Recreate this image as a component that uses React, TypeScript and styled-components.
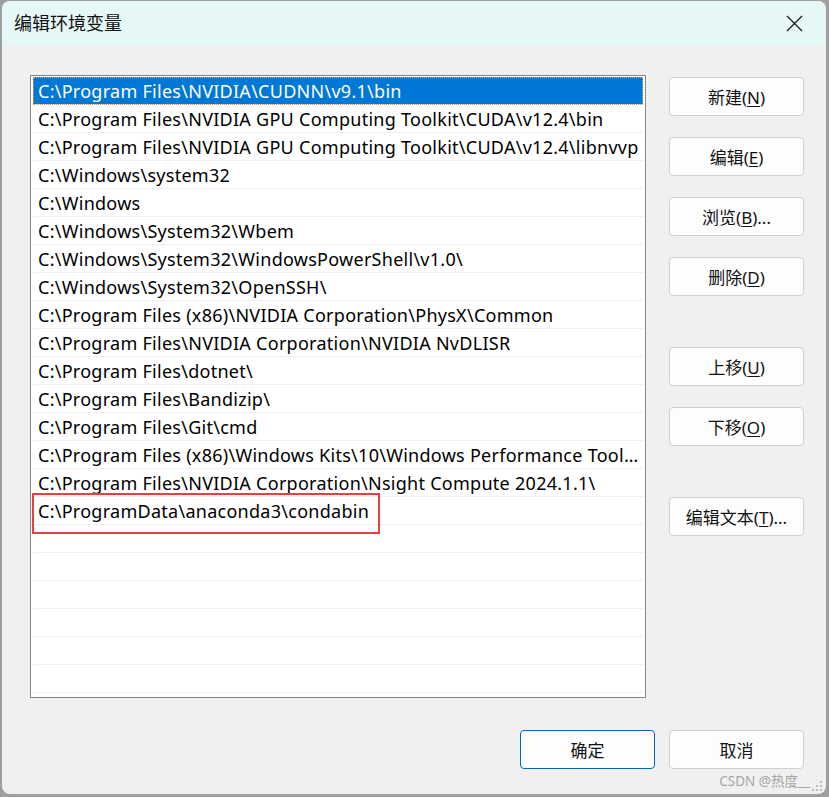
import React from "react";
import styled, { createGlobalStyle } from "styled-components";

const Global = createGlobalStyle`
  html, body {
    margin: 0;
    padding: 0;
    width: 829px;
    height: 797px;
    overflow: hidden;
    background: #9f9f9f;
  }
  * { box-sizing: border-box; }
`;

const FONT = `"Noto Sans", "Noto Sans CJK SC", sans-serif`;

const Window = styled.div`
  position: relative;
  margin: 1px 3px 0 2px;
  width: 824px;
  height: 793px;
  border-radius: 8px;
  background: #f0f0f0;
  overflow: hidden;
  display: flex;
  flex-direction: column;
  font-family: ${FONT};
  color: #000;
`;

const TitleBar = styled.div`
  height: 44px;
  flex: none;
  background: #e6f8f6;
  display: flex;
  align-items: center;
  justify-content: space-between;
  padding: 0 23px 0 12px;
`;

const Title = styled.div`
  font-size: 18px;
  line-height: 1;
  color: #111;
`;

const CloseIcon = styled.svg`
  width: 17px;
  height: 17px;
  display: block;
`;

const Body = styled.div`
  flex: 1;
  display: flex;
  flex-direction: column;
  padding: 30px 22px 0 28px;
`;

const Main = styled.div`
  display: flex;
  gap: 23px;
`;

const ListBox = styled.div`
  position: relative;
  width: 616px;
  height: 623px;
  border: 1px solid #828790;
  background: #fff;
  padding: 1px 2px;
  overflow: hidden;
`;

const Row = styled.div<{ $selected?: boolean }>`
  height: 28px;
  padding: 0 0 0 5px;
  display: flex;
  align-items: center;
  font-size: 18px;
  letter-spacing: 0.27px;
  white-space: nowrap;
  overflow: hidden;
  border-bottom: 1px solid #efefef;
  background: ${(p) => (p.$selected ? "#0078d7" : "transparent")};
  color: ${(p) => (p.$selected ? "#fff" : "#000")};
  outline: ${(p) => (p.$selected ? "1px dotted #e8a060" : "none")};
  outline-offset: -1px;
`;

const RowText = styled.span`
  display: block;
  overflow: hidden;
  text-overflow: ellipsis;
  white-space: nowrap;
  max-width: 100%;
`;

const Highlight = styled.div`
  position: absolute;
  left: 1px;
  top: 417px;
  width: 348px;
  height: 41px;
  border: 2px solid #e8403f;
  pointer-events: none;
`;

const Side = styled.div`
  display: flex;
  flex-direction: column;
  gap: 51px;
  padding-top: 2px;
`;

const Group = styled.div`
  display: flex;
  flex-direction: column;
  gap: 21px;
`;

const Button = styled.button<{ $primary?: boolean }>`
  width: 135px;
  height: 39px;
  border-radius: 4px;
  background: #fdfdfd;
  border: 1px solid ${(p) => (p.$primary ? "#0067c0" : "#d0d0d0")};
  font-family: ${FONT};
  font-size: 17px;
  color: #111;
  padding: 0;
  display: flex;
  align-items: center;
  justify-content: center;
`;

const Key = styled.span`
  text-decoration: underline;
  text-underline-offset: 2px;
`;

const Footer = styled.div`
  display: flex;
  justify-content: flex-end;
  gap: 14px;
  margin-top: 32px;
`;

const Watermark = styled.div`
  position: absolute;
  right: 16px;
  bottom: 6px;
  font-family: "Noto Sans", "Noto Sans CJK SC", sans-serif;
  font-size: 13.5px;
  color: #a6a6a6;
  line-height: 1;
`;

const Grip = styled.svg`
  position: absolute;
  right: 3px;
  bottom: 2px;
  width: 12px;
  height: 12px;
`;

const paths = [
  "C:\\Program Files\\NVIDIA\\CUDNN\\v9.1\\bin",
  "C:\\Program Files\\NVIDIA GPU Computing Toolkit\\CUDA\\v12.4\\bin",
  "C:\\Program Files\\NVIDIA GPU Computing Toolkit\\CUDA\\v12.4\\libnvvp",
  "C:\\Windows\\system32",
  "C:\\Windows",
  "C:\\Windows\\System32\\Wbem",
  "C:\\Windows\\System32\\WindowsPowerShell\\v1.0\\",
  "C:\\Windows\\System32\\OpenSSH\\",
  "C:\\Program Files (x86)\\NVIDIA Corporation\\PhysX\\Common",
  "C:\\Program Files\\NVIDIA Corporation\\NVIDIA NvDLISR",
  "C:\\Program Files\\dotnet\\",
  "C:\\Program Files\\Bandizip\\",
  "C:\\Program Files\\Git\\cmd",
  "C:\\Program Files (x86)\\Windows Kits\\10\\Windows Performance Toolkit\\",
  "C:\\Program Files\\NVIDIA Corporation\\Nsight Compute 2024.1.1\\",
  "C:\\ProgramData\\anaconda3\\condabin",
];

const rows = [...paths, ...Array(7).fill("")];

const Label = ({ text, k, suffix = "" }: { text: string; k: string; suffix?: string }) => (
  <span>
    {text}(<Key>{k}</Key>){suffix}
  </span>
);

export default function App() {
  return (
    <>
      <Global />
      <Window>
        <TitleBar>
          <Title>编辑环境变量</Title>
          <CloseIcon viewBox="0 0 17 17">
            <path d="M1 1 L16 16 M16 1 L1 16" stroke="#1a1a1a" strokeWidth="1.3" fill="none" />
          </CloseIcon>
        </TitleBar>
        <Body>
          <Main>
            <ListBox>
              {rows.map((r, i) => (
                <Row key={i} $selected={i === 0}>
                  <RowText>{r}</RowText>
                </Row>
              ))}
              <Highlight />
            </ListBox>
            <Side>
              <Group>
                <Button><Label text="新建" k="N" /></Button>
                <Button><Label text="编辑" k="E" /></Button>
                <Button><Label text="浏览" k="B" suffix="..." /></Button>
                <Button><Label text="删除" k="D" /></Button>
              </Group>
              <Group>
                <Button><Label text="上移" k="U" /></Button>
                <Button><Label text="下移" k="O" /></Button>
              </Group>
              <Group>
                <Button><Label text="编辑文本" k="T" suffix="..." /></Button>
              </Group>
            </Side>
          </Main>
          <Footer>
            <Button $primary>确定</Button>
            <Button>取消</Button>
          </Footer>
        </Body>
        <Watermark>CSDN @热度__</Watermark>
        <Grip viewBox="0 0 12 12">
          {[
            [9, 1], [9, 5], [5, 5], [9, 9], [5, 9], [1, 9],
          ].map(([x, y], i) => (
            <rect key={i} x={x} y={y} width="2" height="2" fill="#bdbdbd" />
          ))}
        </Grip>
      </Window>
    </>
  );
}
